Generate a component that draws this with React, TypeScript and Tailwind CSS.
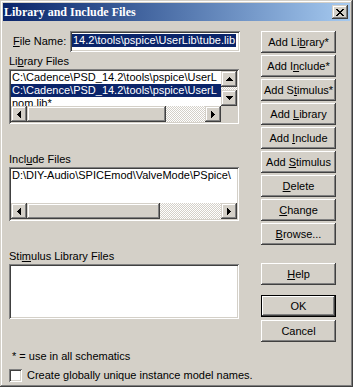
import React from "react";

const UP = ["...X...", "..XXX..", ".XXXXX.", "XXXXXXX"];
const DOWN = ["XXXXXXX", ".XXXXX.", "..XXX..", "...X..."];
const RIGHT = ["X...", "XX..", "XXX.", "XXXX", "XXX.", "XX..", "X..."];
const LEFT = ["...X", "..XX", ".XXX", "XXXX", ".XXX", "..XX", "...X"];
const CLOSE = [
  "XX....XX",
  ".XX..XX.",
  "..XXXX..",
  "...XX...",
  "..XXXX..",
  ".XX..XX.",
  "XX....XX",
];

function Glyph({ rows }: { rows: string[] }) {
  const w = rows[0].length;
  const h = rows.length;
  return (
    <svg width={w} height={h} viewBox={`0 0 ${w} ${h}`} shapeRendering="crispEdges" className="block">
      {rows.flatMap((row, y) =>
        row.split("").map((c, x) =>
          c === "X" ? <rect key={`${x}-${y}`} x={x} y={y} width={1} height={1} fill="#000" /> : null
        )
      )}
    </svg>
  );
}

function ArrowBtn({ rows }: { rows: string[] }) {
  return (
    <div className="w-[16px] h-[16px] shrink-0 bg-[#d4d0c8] flex items-center justify-center shadow-[inset_-1px_-1px_#404040,inset_1px_1px_#d4d0c8,inset_-2px_-2px_#808080,inset_2px_2px_#ffffff]">
      <Glyph rows={rows} />
    </div>
  );
}

function Track({ className }: { className: string }) {
  return (
    <div
      className={
        "bg-[image:repeating-conic-gradient(#ffffff_0_25%,#d4d0c8_0_50%)] bg-[length:2px_2px] " + className
      }
    />
  );
}

function Btn({
  children,
  className = "",
  isDefault = false,
}: {
  children: React.ReactNode;
  className?: string;
  isDefault?: boolean;
}) {
  return (
    <div
      className={
        "w-[75px] h-[22px] shrink-0 bg-[#d4d0c8] flex items-center justify-center whitespace-nowrap " +
        (isDefault
          ? "border border-black shadow-[inset_-1px_-1px_#404040,inset_1px_1px_#ffffff,inset_-2px_-2px_#808080,inset_2px_2px_#d4d0c8] "
          : "shadow-[inset_-1px_-1px_#404040,inset_1px_1px_#ffffff,inset_-2px_-2px_#808080,inset_2px_2px_#d4d0c8] ") +
        className
      }
    >
      <span>{children}</span>
    </div>
  );
}

const sunken =
  "shadow-[inset_1px_1px_#808080,inset_-1px_-1px_#ffffff,inset_2px_2px_#404040,inset_-2px_-2px_#d4d0c8]";

export default function App() {
  return (
    <div className="w-[353px] h-[387px] bg-[#d4d0c8] p-[3px] flex flex-col overflow-hidden text-black font-['Liberation_Sans',Arial,sans-serif] text-[11px] leading-[13px] shadow-[inset_-1px_-1px_#404040,inset_1px_1px_#d4d0c8,inset_-2px_-2px_#808080,inset_2px_2px_#ffffff]">
      {/* Title bar */}
      <div className="h-[18px] shrink-0 flex items-center justify-between bg-linear-to-r from-[#0a246a] to-[#a6caf0] pl-[1px] pr-[2px]">
        <span className="font-['Liberation_Serif','Times_New_Roman',serif] font-bold text-[12px] leading-[14px] text-white">
          Library and Include Files
        </span>
        <div className="w-[16px] h-[14px] bg-[#d4d0c8] flex items-center justify-center shadow-[inset_-1px_-1px_#404040,inset_1px_1px_#d4d0c8,inset_-2px_-2px_#808080,inset_2px_2px_#ffffff]">
          <Glyph rows={CLOSE} />
        </div>
      </div>

      {/* Client */}
      <div className="flex mt-[1px] pl-[6px]">
        {/* Left column */}
        <div className="w-[231px] flex flex-col">
          <div className="mt-[9px] flex items-center h-[21px]">
            <span className="pl-[4px] w-[61px] shrink-0">
              <u>F</u>ile Name:
            </span>
            <div className={"w-[170px] h-[21px] shrink-0 bg-white pl-[1px] pt-[3px] overflow-hidden " + sunken}>
              <div className="flex pl-[1px]">
                <span className="bg-[#0a246a] text-white whitespace-nowrap px-[1px]">
                  14.2\tools\pspice\UserLib\tube.lib
                </span>
              </div>
            </div>
          </div>

          <div className="mt-[3px] h-[13px]">
            Li<u>b</u>rary Files
          </div>
          <div className={"mt-[1px] w-[230px] h-[55px] bg-white p-[2px] flex flex-col " + sunken}>
            <div className="flex-1 flex min-h-0">
              <div className="flex-1 min-w-0 overflow-hidden">
                <div className="h-[13px] pl-[1px] whitespace-nowrap">C:\Cadence\PSD_14.2\tools\pspice\UserL</div>
                <div className="h-[13px] pl-[1px] whitespace-nowrap bg-[#0a246a] text-white">
                  C:\Cadence\PSD_14.2\tools\pspice\UserL
                </div>
                <div className="h-[13px] pl-[1px] whitespace-nowrap">nom.lib*</div>
              </div>
              <div className="w-[16px] flex flex-col">
                <ArrowBtn rows={UP} />
                <Track className="flex-1" />
                <ArrowBtn rows={DOWN} />
              </div>
            </div>
            <div className="h-[16px] flex shrink-0">
              <ArrowBtn rows={LEFT} />
              <div className="w-[139px] h-[16px] bg-[#d4d0c8] shrink-0 shadow-[inset_-1px_-1px_#404040,inset_1px_1px_#d4d0c8,inset_-2px_-2px_#808080,inset_2px_2px_#ffffff]" />
              <Track className="flex-1" />
              <ArrowBtn rows={RIGHT} />
              <div className="w-[16px] h-[16px] bg-[#d4d0c8] shrink-0" />
            </div>
          </div>

          <div className="mt-[29px] h-[13px]">
            Incl<u>u</u>de Files
          </div>
          <div className={"mt-[1px] w-[230px] h-[54px] bg-white p-[2px] flex flex-col " + sunken}>
            <div className="flex-1 min-h-0 overflow-hidden">
              <div className="h-[13px] pl-[1px] whitespace-nowrap">D:\DIY-Audio\SPICEmod\ValveMode\PSpice\</div>
            </div>
            <div className="h-[16px] flex shrink-0">
              <ArrowBtn rows={LEFT} />
              <div className="w-[133px] h-[16px] bg-[#d4d0c8] shrink-0 shadow-[inset_-1px_-1px_#404040,inset_1px_1px_#d4d0c8,inset_-2px_-2px_#808080,inset_2px_2px_#ffffff]" />
              <Track className="flex-1" />
              <ArrowBtn rows={RIGHT} />
            </div>
          </div>

          <div className="mt-[29px] h-[13px]">
            Sti<u>m</u>ulus Library Files
          </div>
          <div className={"mt-[1px] w-[230px] h-[55px] bg-white " + sunken} />

          <div className="mt-[31px] h-[13px] pl-[3px]">* = use in all schematics</div>
          <div className="mt-[6px] flex items-center">
            <div className={"w-[13px] h-[13px] bg-white shrink-0 " + sunken} />
            <span className="ml-[5px] whitespace-nowrap">Create globally unique instance model names.</span>
          </div>
        </div>

        {/* Right column */}
        <div className="ml-[21px] w-[75px] flex flex-col">
          <div className="mt-[9px] flex flex-col gap-[2px]">
            <Btn>
              Add Li<u>b</u>rary*
            </Btn>
            <Btn>
              Add I<u>n</u>clude*
            </Btn>
            <Btn>
              Add S<u>t</u>imulus*
            </Btn>
            <Btn>
              Add <u>L</u>ibrary
            </Btn>
            <Btn>
              Add <u>I</u>nclude
            </Btn>
            <Btn>
              Add <u>S</u>timulus
            </Btn>
            <Btn>
              <u>D</u>elete
            </Btn>
            <Btn>
              <u>C</u>hange
            </Btn>
            <Btn>
              <u>B</u>rowse...
            </Btn>
          </div>
          <Btn className="mt-[18px]">
            <u>H</u>elp
          </Btn>
          <Btn className="mt-[10px]" isDefault>
            OK
          </Btn>
          <Btn className="mt-[3px]">Cancel</Btn>
        </div>
      </div>
    </div>
  );
}
